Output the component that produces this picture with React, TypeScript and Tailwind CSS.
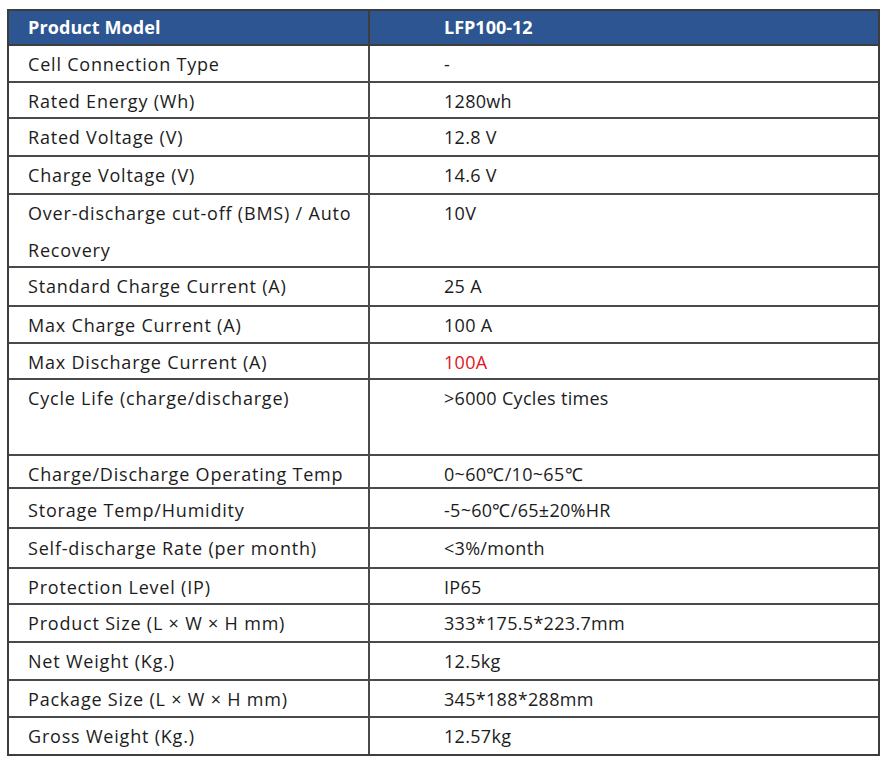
type Row = { label: string; value: string; h: string; pt?: string; red?: boolean };

const rows: Row[] = [
  { label: "Cell Connection Type", value: "-", h: "h-[37px]" },
  { label: "Rated Energy (Wh)", value: "1280wh", h: "h-[36px]" },
  { label: "Rated Voltage (V)", value: "12.8 V", h: "h-[38px]" },
  { label: "Charge Voltage (V)", value: "14.6 V", h: "h-[38px]" },
  { label: "Over-discharge cut-off (BMS) / Auto Recovery", value: "10V", h: "h-[73px]" },
  { label: "Standard Charge Current (A)", value: "25 A", h: "h-[39px]" },
  { label: "Max Charge Current (A)", value: "100 A", h: "h-[37px]" },
  { label: "Max Discharge Current (A)", value: "100A", h: "h-[36px]", red: true },
  { label: "Cycle Life (charge/discharge)", value: ">6000 Cycles times", h: "h-[76px]" },
  { label: "Charge/Discharge Operating Temp", value: "0~60℃/10~65℃", h: "h-[33px]" },
  { label: "Storage Temp/Humidity", value: "-5~60℃/65±20%HR", h: "h-[40px]", pt: "pt-[3px]" },
  { label: "Self-discharge Rate (per month)", value: "<3%/month", h: "h-[40px]", pt: "pt-[1px]" },
  { label: "Protection Level (IP)", value: "IP65", h: "h-[36px]" },
  { label: "Product Size (L × W × H mm)", value: "333*175.5*223.7mm", h: "h-[38px]" },
  { label: "Net Weight (Kg.)", value: "12.5kg", h: "h-[38px]" },
  { label: "Package Size (L × W × H mm)", value: "345*188*288mm", h: "h-[37px]" },
  { label: "Gross Weight (Kg.)", value: "12.57kg", h: "h-[36px]" },
];

export default function App() {
  return (
    <div className="w-[889px] h-[764px] bg-white pt-[9px] pl-[7px] font-['Open_Sans',sans-serif] text-[18px] tracking-[0.8px] text-[#1c1c1c]">
      <div className="w-[873px] border-2 border-[#3d3d3d]">
        <div className="flex h-[35px] bg-[#2c5592] text-white font-bold border-b-2 border-[#3d3d3d]">
          <div className="w-[361px] shrink-0 border-r-2 border-[#3d3d3d] pl-[19px] flex items-center tracking-[0.1px]">
            Product Model
          </div>
          <div className="flex-1 pl-[74px] flex items-center tracking-normal">LFP100-12</div>
        </div>
        {rows.map((r, i) => (
          <div
            key={r.label}
            className={`flex ${r.h} ${i < rows.length - 1 ? "border-b-2 border-[#4a4a4a]" : ""}`}
          >
            <div className={`w-[361px] shrink-0 border-r-2 border-[#4a4a4a] pl-[19px] pr-2 leading-[37px] ${r.pt ?? ""}`}>
              {r.label}
            </div>
            <div
              className={`flex-1 pl-[74px] leading-[37px] tracking-[0.3px] ${r.pt ?? ""} ${r.red ? "text-[#e3141b]" : ""}`}
            >
              {r.value}
            </div>
          </div>
        ))}
      </div>
    </div>
  );
}
